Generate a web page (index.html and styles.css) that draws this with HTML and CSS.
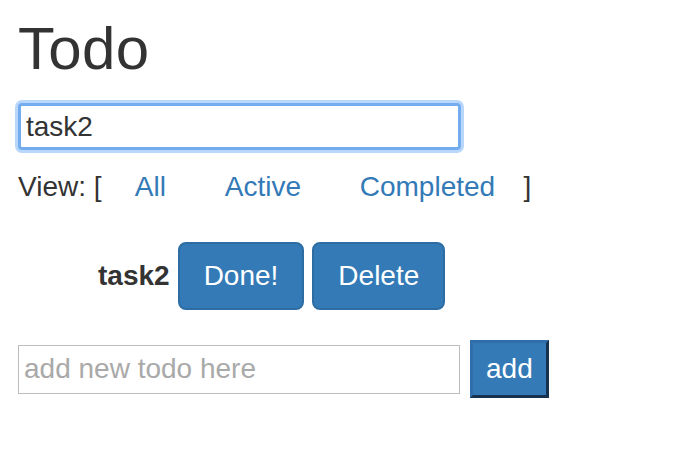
FILE: index.html
```html
<!DOCTYPE html>
<html lang="en">
<head>
<meta charset="utf-8">
<title>Todo</title>
<link rel="stylesheet" href="styles.css">
</head>
<body>
<h1 class="title">Todo</h1>
<input class="search" type="text" value="task2">
<div class="view">View: [ <a class="filter" href="#">All</a> <a class="filter" href="#">Active</a> <a class="filter filter-last" href="#">Completed</a> ]</div>
<ul class="todos">
  <li class="todo">
    <span class="todo-name">task2</span>
    <button class="btn">Done!</button>
    <button class="btn">Delete</button>
  </li>
</ul>
<form class="new-form">
  <input class="new-input" type="text" placeholder="add new todo here">
  <button class="add" type="button">add</button>
</form>
</body>
</html>
```
FILE: styles.css
```css
html, body {
  background: #fff;
}
body {
  margin: 0;
  padding: 17px 18px;
  font-family: "Liberation Sans", Arial, Helvetica, sans-serif;
  font-size: 28px;
  line-height: 40px;
  color: #333;
}
.title {
  margin: 0;
  font-size: 60px;
  line-height: 64px;
  font-weight: normal;
  letter-spacing: 0.3px;
}
.search {
  display: block;
  box-sizing: border-box;
  margin-top: 22px;
  width: 443px;
  height: 47px;
  padding: 0 5px;
  border: 3px solid #74acf0;
  border-radius: 4px;
  box-shadow: 0 0 0 3px #b9d7fb;
  outline: none;
  font-family: inherit;
  font-size: 28px;
  color: #333;
  background: #fff;
}
.view {
  margin-top: 17px;
  line-height: 40px;
}
.filter {
  margin: 0 25.5px;
  color: #337ab7;
  text-decoration: none;
}
.filter-last {
  margin-right: 20.5px;
}
.todos {
  margin: 35px 0 0;
  padding-left: 80px;
  list-style: none;
}
.todo {
  display: flex;
  align-items: baseline;
  gap: 8px;
}
.todo-name {
  font-weight: bold;
}
.btn {
  font-family: inherit;
  font-size: 28px;
  line-height: 40px;
  padding: 12px 24px;
  border: 2px solid #2e6da4;
  border-radius: 8px;
  background: #337ab7;
  color: #fff;
  margin: 0;
}
.new-form {
  display: flex;
  align-items: center;
  gap: 10px;
  margin: 30px 0 0;
}
.new-input {
  box-sizing: border-box;
  width: 442px;
  height: 49px;
  padding: 0 5px;
  border: 1px solid #bdbdbd;
  border-radius: 0;
  outline: none;
  font-family: inherit;
  font-size: 28px;
  color: #333;
  margin: 0;
}
.new-input::placeholder {
  color: #a9a9a9;
}
.add {
  box-sizing: border-box;
  height: 58px;
  padding: 0 13px;
  margin: 0;
  border: 3px solid;
  border-color: #2f6ea8 #17324f #17324f #2f6ea8;
  border-radius: 0;
  background: #337ab7;
  color: #fff;
  font-family: inherit;
  font-size: 28px;
}
```
